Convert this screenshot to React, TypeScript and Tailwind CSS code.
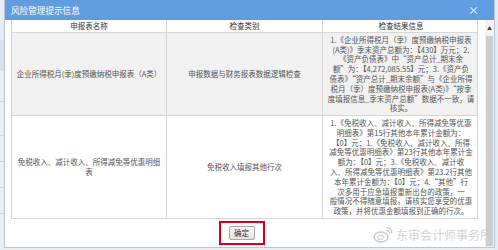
import React from "react";

const FONT = { fontFamily: '"Noto Sans CJK SC", "Noto Sans", sans-serif' };

const ROW1_RESULT = [
  "1.《企业所得税月（季）度预缴纳税申报表",
  "(A类)》季末资产总额为：【430】万元；2.",
  "《资产负债表》中“资产总计_期末余",
  "额”为：【4,272,085.55】元；3.《资产负",
  "债表》“资产总计_期末余额”与《企业所得",
  "税月（季）度预缴纳税申报表(A类)》“按季",
  "度填报信息_季末资产总额”数据不一致，请",
  "核实。",
];

const ROW2_RESULT = [
  "1.《免税收入、减计收入、所得减免等优惠",
  "明细表》第15行其他本年累计金额为：",
  "【0】元；1.《免税收入、减计收入、所得",
  "减免等优惠明细表》第23行其他本年累计金",
  "额为：【0】元；3.《免税收入、减计收",
  "入、所得减免等优惠明细表》第23.2行其他",
  "本年累计金额为：【0】元；4.“其他”行",
  "次多用于应急填报重新出台的政策，一",
  "般情况不得随意填报，请核实您享受的优惠",
  "政策，并将优惠金额填报到正确的行次。",
];

const ROWS = [
  {
    id: "a",
    name: ["企业所得税月(季)度预缴纳税申报表（A类）"],
    type: "申报数据与财务报表数据逻辑检查",
    result: ROW1_RESULT,
    rowClassName: "h-[83px] bg-[#f1f1f1]",
  },
  {
    id: "b",
    name: ["免税收入、减计收入、所得减免等优惠明细", "表"],
    type: "免税收入填报其他行次",
    result: ROW2_RESULT,
    rowClassName: "h-[102px] bg-white",
  },
];

function Lines({ lines }: { lines: string[] }) {
  return (
    <div className="flex flex-col items-center">
      {lines.map((l, i) => (
        <div key={i} className="whitespace-nowrap leading-[9.8px]">
          {l}
        </div>
      ))}
    </div>
  );
}

function WeiboMark() {
  return (
    <svg width="20" height="16" viewBox="0 0 20 16" fill="none">
      <ellipse cx="8" cy="10" rx="7" ry="5" stroke="#c4c4c4" strokeWidth="1.3" />
      <ellipse cx="7.5" cy="10.5" rx="3" ry="2.2" stroke="#c4c4c4" strokeWidth="1" />
      <path d="M13 3.5c2-.6 4 1 3.6 3" stroke="#c4c4c4" strokeWidth="1.2" />
      <path d="M13.5 1c3.5-.5 6 2.5 5 5.5" stroke="#c4c4c4" strokeWidth="1.2" />
    </svg>
  );
}

export default function App() {
  return (
    <div className="w-[498px] h-[250px] flex bg-[#e9eef3] overflow-hidden" style={FONT}>
      {/* page behind the dialog */}
      <div className="w-[4px] flex flex-col">
        <div className="h-[40px] bg-[#e4ebf2]" />
        <div className="h-[30px] bg-[#d5e2ef] border-b border-[#c9d3dc]" />
        <div className="h-[32px] border-b border-[#c9d3dc]" />
        <div className="h-[34px] border-b border-[#c9d3dc]" />
        <div className="h-[26px] border-b border-[#c9d3dc]" />
        <div className="h-[26px] border-b border-[#c9d3dc]" />
        <div className="h-[26px] border-b border-[#c9d3dc]" />
      </div>

      {/* dialog */}
      <div className="relative w-[491px] h-[248px] flex flex-col bg-white border-x border-b border-[#b9c6d3]">
        <div className="h-[20px] shrink-0 flex items-center justify-between bg-[#5f9de0] pl-[6px] pr-[15px] text-white">
          <span className="text-[8.6px]">风险管理提示信息</span>
          <span className="text-[11px] leading-none">×</span>
        </div>

        <div className="flex flex-1 min-h-0">
          <div className="flex flex-col pl-[6px]">
            {/* table */}
            <div className="w-[467px] border-x border-b border-[#d6d6d6] text-[7.5px] text-[#555]">
              <div className="grid grid-cols-[155px_156px_156px] h-[13px] bg-white border-b border-[#d6d6d6] text-[#333]">
                <div className="flex items-center justify-center border-r border-[#d6d6d6]">申报表名称</div>
                <div className="flex items-center justify-center border-r border-[#d6d6d6]">检查类别</div>
                <div className="flex items-center justify-center">检查结果信息</div>
              </div>
              {ROWS.map((row, i) => (
                <div
                  key={row.id}
                  className={`grid grid-cols-[155px_156px_156px] ${row.rowClassName} ${
                    i === 0 ? "border-b border-[#d6d6d6]" : ""
                  }`}
                >
                  <div className="flex items-center justify-center border-r border-[#d6d6d6]">
                    <Lines lines={row.name} />
                  </div>
                  <div className="flex items-center justify-center border-r border-[#d6d6d6]">
                    {row.type}
                  </div>
                  <div className="flex items-center justify-center">
                    <Lines lines={row.result} />
                  </div>
                </div>
              ))}
            </div>

            {/* footer */}
            <div className="flex-1 flex items-center justify-center pr-[6px]">
              <div className="border-[2.5px] border-[#d7001a] px-[8px] py-[3px]">
                <button className="h-[14px] w-[26px] flex items-center justify-center text-[7.5px] text-[#333] bg-gradient-to-b from-[#fafafa] to-[#e4e4e4] border border-[#a9a9a9] rounded-[2px]">
                  确定
                </button>
              </div>
            </div>
          </div>

          {/* scrollbar */}
          <div className="ml-[7px] w-[9px] flex flex-col bg-[#f3f3f3]">
            <div className="h-[16px] flex items-center justify-center text-[5px] text-[#444]">▲</div>
            <div className="flex-1 mx-[1px] mb-[1px] bg-[#cdcdcd]" />
          </div>
        </div>

        {/* watermark */}
        <div className="absolute right-[2px] bottom-[3px] flex items-center gap-[3px] text-[12px] text-[#cfcfcf] opacity-90">
          <WeiboMark />
          <span>东审会计师事务所</span>
        </div>
      </div>

      <div className="flex-1 bg-[#e4ebf2]" />
    </div>
  );
}
